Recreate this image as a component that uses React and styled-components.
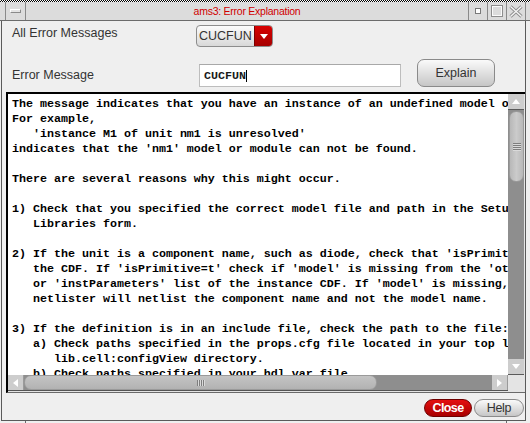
import React from "react";
import styled, { createGlobalStyle } from "styled-components";

const GlobalStyle = createGlobalStyle`
  html, body { margin: 0; padding: 0; background: #efefef; overflow: hidden; }
  #root { width: 530px; height: 423px; }
  * { box-sizing: border-box; }
`;

const Window = styled.div`
  width: 530px;
  height: 423px;
  background: #efefef;
  display: flex;
  flex-direction: column;
  font-family: "Liberation Sans", Arial, sans-serif;
  overflow: hidden;
`;

const TopDots = styled.div`
  height: 2px;
  flex: none;
  background: repeating-conic-gradient(#000 0 25%, #fff 0 50%) 0 0 / 2px 2px;
`;

const TitleBar = styled.div`
  height: 19px;
  flex: none;
  display: flex;
  background: #dcdcdc;
  border-bottom: 1px solid #6b6b6b;
  padding: 0 4px 0 5px;
`;

const MenuButton = styled.div`
  width: 21px;
  border-left: 1px solid #8a8a8a;
  border-right: 1px solid #8a8a8a;
  display: flex;
  align-items: center;
  justify-content: center;
`;

const MenuBar = styled.div`
  width: 11px;
  height: 4px;
  margin-top: -1px;
  background: #e4e4e4;
  border-top: 1px solid #fff;
  border-left: 1px solid #fff;
  border-bottom: 1px solid #8a8a8a;
  border-right: 1px solid #8a8a8a;
`;

const Title = styled.div`
  flex: 1;
  text-align: center;
  color: #d00000;
  font-size: 10.5px;
  letter-spacing: -0.25px;
  line-height: 18px;
`;

const WinButton = styled.div`
  border-left: 1px solid #8a8a8a;
  border-right: ${(p) => (p.$last ? "1px solid #8a8a8a" : "none")};
  width: ${(p) => (p.$last ? "20px" : "19px")};
  display: flex;
  align-items: center;
  justify-content: center;
`;

const Frame = styled.div`
  flex: 1;
  min-height: 0;
  margin: 0 4px 0 1px;
  border-left: 1px solid #5a5a5a;
  border-right: 1px solid #5a5a5a;
  border-bottom: 1px solid #5a5a5a;
  display: flex;
  flex-direction: column;
`;

const BottomEdge = styled.div`
  height: 2px;
  flex: none;
  display: flex;
`;

const EdgeSeg = styled.div`
  width: ${(p) => p.$w || "auto"};
  flex: ${(p) => (p.$w ? "none" : "1")};
  border-right: ${(p) => (p.$tick ? "1px solid #6a6a6a" : "none")};
`;

const Row = styled.div`
  flex: none;
  display: flex;
  align-items: flex-start;
  padding-left: 10px;
  height: ${(p) => p.$h}px;
  margin-top: ${(p) => p.$mt}px;
`;

const Label = styled.div`
  width: ${(p) => p.$w}px;
  margin-top: ${(p) => p.$mt}px;
  font-size: 12.5px;
  line-height: 14px;
  color: #333;
  flex: none;
`;

const Combo = styled.div`
  width: 77px;
  height: 22px;
  border: 1px solid #8c8c8c;
  border-radius: 4px;
  background: linear-gradient(#fbfbfb, #d8d8d8);
  display: flex;
  overflow: hidden;
`;

const ComboText = styled.div`
  flex: 1;
  padding-left: 2px;
  font-size: 12.5px;
  line-height: 20px;
  color: #333;
`;

const ComboArrow = styled.div`
  width: 18px;
  background: linear-gradient(#d80000, #a50000);
  border-left: 1px solid #7a0000;
  display: flex;
  justify-content: center;
  padding-top: 8px;
`;

const Field = styled.div`
  width: 202px;
  height: 23px;
  margin-top: 5px;
  background: #fff;
  border: 1px solid #bdbdbd;
  border-top-color: #a8a8a8;
  padding-left: 4px;
  display: flex;
  align-items: center;
  font-family: "Liberation Mono", "Courier New", monospace;
  font-weight: bold;
  font-size: 11.67px;
  color: #1a1a1a;
`;

const Caret = styled.span`
  display: inline-block;
  width: 1px;
  height: 12px;
  background: #000;
`;

const PushButton = styled.button`
  width: ${(p) => p.$w}px;
  height: ${(p) => p.$h}px;
  margin-left: ${(p) => p.$ml || 0}px;
  border-radius: ${(p) => p.$r}px;
  border: 1px solid ${(p) => (p.$red ? "#6e0000" : "#8a8a8a")};
  background: ${(p) =>
    p.$red
      ? "linear-gradient(#e41010, #a80000)"
      : "linear-gradient(#fafafa, #c6c6c6)"};
  color: ${(p) => (p.$red ? "#fff" : "#333")};
  font-family: "Liberation Sans", Arial, sans-serif;
  font-weight: ${(p) => (p.$red ? "bold" : "normal")};
  font-size: 12.5px;
  letter-spacing: ${(p) => p.$ls || 0}px;
  padding: 0;
  line-height: 1;
  display: flex;
  align-items: center;
  justify-content: center;
  flex: none;
`;

const TextBox = styled.div`
  flex: none;
  margin: 5px 0 0 4px;
  border-top: 2px solid #000;
  border-left: 2px solid #000;
  border-bottom: 1px solid #6a6a6a;
  padding-bottom: 1px;
  background: #e4e4e4;
  display: grid;
  grid-template-columns: 500px 17px;
  grid-template-rows: 281px 16px;
`;

const TextArea = styled.pre`
  margin: 0;
  background: #fff;
  overflow: hidden;
  padding: 3px 0 0 4px;
  font-family: "Liberation Mono", "Courier New", monospace;
  font-weight: bold;
  font-size: 11.67px;
  line-height: 15px;
  color: #000;
  white-space: pre;
`;

const VScroll = styled.div`
  width: 16px;
  background: #8e8e8e;
  display: flex;
  flex-direction: column;
`;

const HScroll = styled.div`
  background: #8e8e8e;
  display: flex;
  border-bottom: 1px solid #555;
`;

const ArrowBtn = styled.div`
  width: 16px;
  height: ${(p) => (p.$v ? "16px" : "15px")};
  flex: none;
  background: #cdcdcd;
  border-bottom: ${(p) => (p.$v ? "1px solid #5a5a5a" : "none")};
  border-right: ${(p) => (p.$v ? "none" : "1px solid #9a9a9a")};
  display: flex;
  align-items: center;
  justify-content: center;
`;

const Thumb = styled.div`
  flex: none;
  background: ${(p) =>
    p.$v
      ? "linear-gradient(90deg, #b8b8b8, #cbcbcb 50%, #b8b8b8)"
      : "linear-gradient(#c4c4c4, #b2b2b2)"};
  border: 1px solid #9a9a9a;
  border-radius: 7px;
  display: flex;
  align-items: center;
  justify-content: center;
  ${(p) =>
    p.$v
      ? "width: 15px; height: 71px; margin: 1px 0 0 1px;"
      : "width: 353px; height: 15px;"}
`;

const Grip = styled.div`
  width: 8px;
  height: ${(p) => (p.$v ? "8px" : "6px")};
  background: ${(p) =>
    p.$v
      ? "repeating-linear-gradient(180deg, #7e7e7e 0 1px, #dadada 1px 2px)"
      : "repeating-linear-gradient(90deg, #7e7e7e 0 1px, #dadada 1px 2px)"};
`;

const Track = styled.div`
  flex: 1;
`;

const ButtonBar = styled.div`
  flex: 1;
  display: flex;
  justify-content: flex-end;
  align-items: flex-start;
  padding: 6px 1px 0 0;
  gap: 2px;
`;

const Tri = ({ dir, color = "#fff" }) => {
  const vert = dir === "up" || dir === "down";
  const w = vert ? 8 : 5;
  const h = vert ? 5 : 8;
  const pts = {
    up: "0,5 4,0 8,5",
    down: "0,0 8,0 4,5",
    left: "5,0 5,8 0,4",
    right: "0,0 0,8 5,4",
  }[dir];
  return (
    <svg width={w} height={h} viewBox={`0 0 ${w} ${h}`}>
      <polygon points={pts} fill={color} />
    </svg>
  );
};

const IconifyIcon = () => (
  <svg width="6" height="6" viewBox="0 0 6 6">
    <rect x="0.5" y="0.5" width="5" height="5" fill="#fff" stroke="#7a7a7a" />
  </svg>
);

const MaxIcon = () => (
  <svg width="12" height="12" viewBox="0 0 12 12">
    <rect x="0.5" y="0.5" width="11" height="11" fill="none" stroke="#8e8e8e" />
    <rect x="1.5" y="1.5" width="9" height="9" fill="none" stroke="#fafafa" />
  </svg>
);

const CloseIcon = () => (
  <svg width="14" height="13" viewBox="0 0 14 13">
    <path d="M1.5 1.5 L12.5 11.5 M12.5 1.5 L1.5 11.5" stroke="#8e8e8e" strokeWidth="3.2" />
    <path d="M1.5 1.5 L12.5 11.5 M12.5 1.5 L1.5 11.5" stroke="#f6f6f6" strokeWidth="1.3" />
  </svg>
);

const message = [
  "The message indicates that you have an instance of an undefined model or module.",
  "For example,",
  "   'instance M1 of unit nm1 is unresolved'",
  "indicates that the 'nm1' model or module can not be found.",
  "",
  "There are several reasons why this might occur.",
  "",
  "1) Check that you specified the correct model file and path in the Setup",
  "   Libraries form.",
  "",
  "2) If the unit is a component name, such as diode, check that 'isPrimitive=t' in",
  "   the CDF. If 'isPrimitive=t' check if 'model' is missing from the 'otherParameters'",
  "   or 'instParameters' list of the instance CDF. If 'model' is missing, the",
  "   netlister will netlist the component name and not the model name.",
  "",
  "3) If the definition is in an include file, check the path to the file:",
  "   a) Check paths specified in the props.cfg file located in your top level",
  "      lib.cell:configView directory.",
  "   b) Check paths specified in your hdl.var file.",
  "",
].join("\n");

export default function App() {
  return (
    <>
      <GlobalStyle />
      <Window>
        <TopDots />
        <TitleBar>
          <MenuButton>
            <MenuBar />
          </MenuButton>
          <Title>ams3: Error Explanation</Title>
          <WinButton>
            <IconifyIcon />
          </WinButton>
          <WinButton>
            <MaxIcon />
          </WinButton>
          <WinButton $last>
            <CloseIcon />
          </WinButton>
        </TitleBar>
        <Frame>
          <Row $h={22} $mt={4}>
            <Label $w={184} $mt={1}>All Error Messages</Label>
            <Combo>
              <ComboText>CUCFUN</ComboText>
              <ComboArrow>
                <Tri dir="down" />
              </ComboArrow>
            </Combo>
          </Row>
          <Row $h={28} $mt={12}>
            <Label $w={187} $mt={9}>Error Message</Label>
            <Field>
              CUCFUN
              <Caret />
            </Field>
            <PushButton $w={78} $h={28} $r={7} $ml={16}>Explain</PushButton>
          </Row>
          <TextBox>
            <TextArea>{message}</TextArea>
            <VScroll>
              <ArrowBtn $v>
                <Tri dir="up" />
              </ArrowBtn>
              <Thumb $v>
                <Grip $v />
              </Thumb>
              <Track />
              <ArrowBtn $v>
                <Tri dir="down" />
              </ArrowBtn>
            </VScroll>
            <HScroll>
              <ArrowBtn>
                <Tri dir="left" />
              </ArrowBtn>
              <Thumb>
                <Grip />
              </Thumb>
              <Track />
              <ArrowBtn>
                <Tri dir="right" />
              </ArrowBtn>
            </HScroll>
            <div />
          </TextBox>
          <ButtonBar>
            <PushButton $w={48} $h={18} $r={9} $red $ls={-0.6}>Close</PushButton>
            <PushButton $w={50} $h={18} $r={9} $ls={-0.3}>Help</PushButton>
          </ButtonBar>
        </Frame>
        <BottomEdge>
          <EdgeSeg $w="26px" $tick />
          <EdgeSeg $tick />
          <EdgeSeg $w="23px" />
        </BottomEdge>
      </Window>
    </>
  );
}
